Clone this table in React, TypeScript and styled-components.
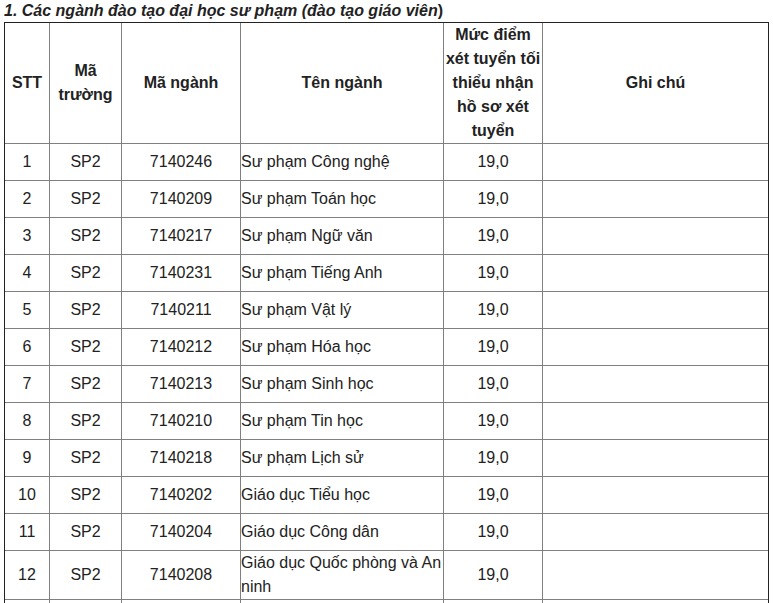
import React from "react";
import styled, { createGlobalStyle } from "styled-components";

const Global = createGlobalStyle`
  html, body { margin: 0; padding: 0; background: #fff; }
  body { font-family: "Liberation Sans", Arial, sans-serif; color: #222; }
`;

const Page = styled.div`
  padding: 0 0 0 4px;
`;

const Title = styled.div`
  font-size: 16px;
  line-height: 22px;
  font-weight: bold;
  white-space: nowrap;
`;

const Em = styled.em`
  font-style: italic;
`;

const Table = styled.table`
  border-collapse: separate;
  border-spacing: 0;
  border-top: 1px solid #222;
  border-left: 1px solid #222;
  border-right: 1px solid #222;
  table-layout: fixed;
  width: 765px;
  font-size: 16px;
  line-height: 24px;
`;

const Col = styled.col<{ $w: number }>`
  width: ${(p) => p.$w}px;
`;

const Th = styled.th`
  font-weight: bold;
  text-align: center;
  vertical-align: middle;
  padding: 0;
  border-right: 1px solid #808080;
  border-bottom: 1px solid #808080;
  &:last-child { border-right: none; }
`;

const Td = styled.td<{ $align?: "left" | "center" }>`
  text-align: ${(p) => p.$align ?? "center"};
  vertical-align: middle;
  padding: 0;
  height: 36px;
  border-right: 1px solid #808080;
  border-bottom: 1px solid #808080;
  &:last-child { border-right: none; }
`;

const rows: [string, string, string][] = [
  ["1", "7140246", "Sư phạm Công nghệ"],
  ["2", "7140209", "Sư phạm Toán học"],
  ["3", "7140217", "Sư phạm Ngữ văn"],
  ["4", "7140231", "Sư phạm Tiếng Anh"],
  ["5", "7140211", "Sư phạm Vật lý"],
  ["6", "7140212", "Sư phạm Hóa học"],
  ["7", "7140213", "Sư phạm Sinh học"],
  ["8", "7140210", "Sư phạm Tin học"],
  ["9", "7140218", "Sư phạm Lịch sử"],
  ["10", "7140202", "Giáo dục Tiểu học"],
  ["11", "7140204", "Giáo dục Công dân"],
  ["12", "7140208", "Giáo dục Quốc phòng và An ninh"],
];

export default function App() {
  return (
    <Page>
      <Global />
      <Title>
        <Em>1. Các ngành đào tạo đại học sư phạm (đào tạo giáo viên</Em>)
      </Title>
      <Table>
        <colgroup>
          <Col $w={45} />
          <Col $w={72} />
          <Col $w={119} />
          <Col $w={203} />
          <Col $w={99} />
          <Col $w={225} />
        </colgroup>
        <thead>
          <tr>
            <Th>STT</Th>
            <Th>Mã trường</Th>
            <Th>Mã ngành</Th>
            <Th>Tên ngành</Th>
            <Th>Mức điểm xét tuyển tối thiểu nhận hồ sơ xét tuyển</Th>
            <Th>Ghi chú</Th>
          </tr>
        </thead>
        <tbody>
          {rows.map(([n, code, name]) => (
            <tr key={n}>
              <Td>{n}</Td>
              <Td>SP2</Td>
              <Td>{code}</Td>
              <Td $align="left">{name}</Td>
              <Td>19,0</Td>
              <Td></Td>
            </tr>
          ))}
          <tr>
            <Td></Td>
            <Td></Td>
            <Td></Td>
            <Td $align="left"></Td>
            <Td></Td>
            <Td></Td>
          </tr>
        </tbody>
      </Table>
    </Page>
  );
}
